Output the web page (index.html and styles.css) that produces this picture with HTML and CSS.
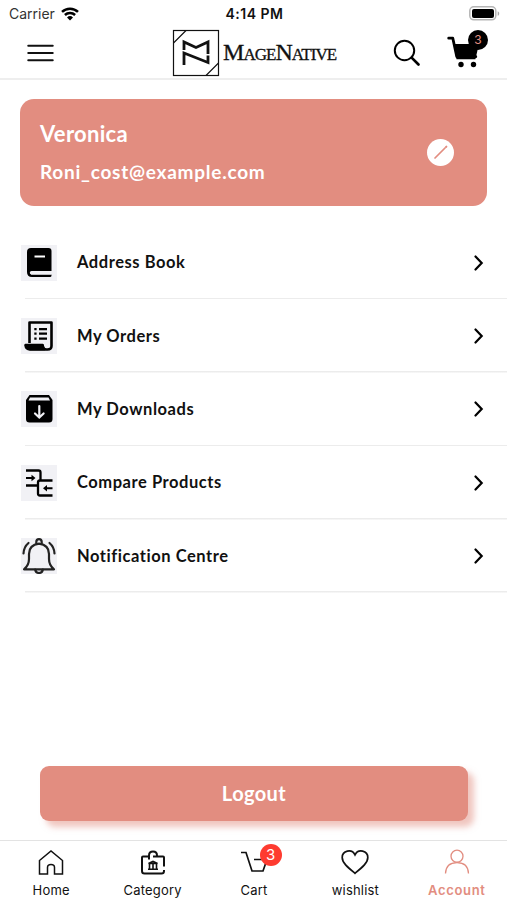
FILE: index.html
```html
<!DOCTYPE html>
<html lang="en">
<head>
    <meta charset="UTF-8">
    <meta name="viewport" content="width=device-width, initial-scale=1">
    <link rel="stylesheet" href="styles.css">
    <title>My Account</title>
</head>
<body>
    <div class="status-bar">
        <div class="carrier">
            <span>Carrier</span>
            <svg width="18" height="14" viewBox="0 0 18 14" fill="none" stroke="#000" stroke-width="2.5">
                <path d="M1 4.9a11.5 11.5 0 0 1 16 0"/>
                <path d="M3.9 8a7.4 7.4 0 0 1 10.2 0"/>
                <path d="M9 13.6l-3-3.1a4.4 4.4 0 0 1 6 0z" fill="#000" stroke="none"/>
            </svg>
        </div>
        <div class="time">4:14 PM</div>
        <div class="battery">
            <svg width="31" height="15" viewBox="0 0 31 15">
                <rect x=".8" y=".8" width="26" height="13" rx="4" fill="#fff" stroke="#b5b5b5" stroke-width="1.5"/>
                <rect x="3" y="3" width="22" height="9" rx="2" fill="#000"/>
                <path d="M28.7 5.2c2 .8 2 3.8 0 4.6z" fill="#a8a8a8"/>
            </svg>
        </div>
    </div>

    <header class="header">
        <svg class="menu-icon" width="27" height="18" viewBox="0 0 27 18" stroke="#111" stroke-width="2.1" stroke-linecap="round">
            <path d="M1.3 1.8h24.4M1.3 9h24.4M1.3 16.2h24.4"/>
        </svg>
        <div class="logo">
            <svg width="48" height="48" viewBox="0 0 48 48" fill="none" stroke="#111">
                <rect x="1.5" y="1.5" width="45" height="45" stroke-width="1.2"/>
                <path d="M1.500 14L14 1.500M34 46.500L46.500 34" stroke-width="1.1"/>
                <path d="M12 21v-8l12 5.500 12-5.500V25" stroke-width="2.800"/>
                <path d="M12 36V24l24 9.500v-7" stroke-width="2.800"/>
            </svg>
            <span class="logo-text">MageNative</span>
        </div>
        <div class="header-actions">
            <svg width="28" height="28" viewBox="0 0 28 28" fill="none" stroke="#000" stroke-linecap="round">
                <circle cx="11.500" cy="11.500" r="9.700" stroke-width="2"/>
                <path d="M18.600 18.600l6.900 6.900" stroke-width="2.700"/>
            </svg>
            <div class="header-cart">
                <svg width="34" height="34" viewBox="0 0 34 34">
                    <path d="M1.700 2.200h4.100l4 18.500h19" fill="none" stroke="#000" stroke-width="2.800" stroke-linecap="round" stroke-linejoin="round"/>
                    <path d="M6.500 8h25.500l-3.600 15.200H9.500z"/>
                    <circle cx="14" cy="28.500" r="2.700"/>
                    <circle cx="26.500" cy="28.500" r="2.700"/>
                </svg>
                <span class="header-badge">3</span>
            </div>
        </div>
    </header>

    <main class="content">
        <section class="profile">
            <div>
                <h1 class="profile-name">Veronica</h1>
                <p class="profile-email">Roni_cost@example.com</p>
            </div>
            <button class="edit-button" type="button" aria-label="Edit">
                <svg width="27" height="27" viewBox="0 0 27 27" stroke="#e28d80" stroke-linecap="round">
                    <path d="M8 19L18 9" stroke-width="1.700"/>
                    <path d="M19 8l.4-.4" stroke-width="2"/>
                </svg>
            </button>
        </section>

        <ul class="menu">
            <li class="menu-item">
                <span class="menu-tile">
                    <svg width="36" height="36" viewBox="0 0 36 36">
                        <path d="M10 3h17.500q3 0 3 3v20H10.500a1.700 1.700 0 0 0 0 3.400H30.500v1q0 1.600-1.500 1.600H11q-5 0-5-5V7q0-4 4-4z"/>
                        <path d="M13.500 11.500h10.500" stroke="#fff" stroke-width="2"/>
                        <path d="M10 28.300H30.500" stroke="#f1f1f5" stroke-width="2.500"/>
                    </svg>
                </span>
                <span class="menu-label">Address Book</span>
                <svg class="chevron" width="10" height="16" viewBox="0 0 10 16"><path d="M1.500 1.500L7.700 8l-6.200 6.500"/></svg>
            </li>
            <li class="menu-item">
                <span class="menu-tile">
                    <svg width="36" height="36" viewBox="0 0 36 36" fill="none" stroke="#000" stroke-width="2.600" stroke-linejoin="round">
                        <path d="M8.500 25V4.500h22V28q0 3.500-4 3.500H9q-4 0-4.500-4.300h17q0 4.300 4 4.300"/>
                        <path d="M4.500 26.500h17.300l1.800 5H9q-4 0-4.500-5z" fill="#000" stroke-width="1.500"/>
                        <path d="M13.300 11.200h2.300M18 11.200h8M13.300 15.700h2.300M18 15.700h8M13.300 20.700h2.300M18 20.700h8" stroke-width="2.300"/>
                    </svg>
                </span>
                <span class="menu-label">My Orders</span>
                <svg class="chevron" width="10" height="16" viewBox="0 0 10 16"><path d="M1.500 1.500L7.700 8l-6.200 6.500"/></svg>
            </li>
            <li class="menu-item">
                <span class="menu-tile">
                    <svg width="36" height="36" viewBox="0 0 36 36">
                        <path d="M8.500 4h19.500l3.500 5v19q0 3.500-3.500 3.500H8.500Q5 31.500 5 28V9z"/>
                        <path d="M7.500 9.500l1.500-3h18.500l1.500 3z" fill="#f1f1f5"/>
                        <path d="M18.300 15v11M14 22.500l4.300 4 4.300-4" fill="none" stroke="#f1f1f5" stroke-width="2.200" stroke-linecap="round"/>
                    </svg>
                </span>
                <span class="menu-label">My Downloads</span>
                <svg class="chevron" width="10" height="16" viewBox="0 0 10 16"><path d="M1.500 1.500L7.700 8l-6.200 6.500"/></svg>
            </li>
            <li class="menu-item">
                <span class="menu-tile">
                    <svg width="36" height="36" viewBox="0 0 36 36" fill="none" stroke="#000" stroke-width="2.300" stroke-linejoin="round">
                        <path d="M5 5.500H17.500q2 0 2 2v7.500M5 20.500h12.500"/>
                        <path d="M31.500 15.500H19q-2 0-2 2V28.500q0 2 2 2h12.500"/>
                        <path d="M5 13h7M31.500 23.300h-7" stroke-width="2"/>
                        <path d="M10.500 9.800v6.400l4-3.200zM26 20.100v6.400l-4-3.200z" fill="#000" stroke="none"/>
                    </svg>
                </span>
                <span class="menu-label">Compare Products</span>
                <svg class="chevron" width="10" height="16" viewBox="0 0 10 16"><path d="M1.500 1.500L7.700 8l-6.200 6.500"/></svg>
            </li>
            <li class="menu-item">
                <span class="menu-tile">
                    <svg width="36" height="36" viewBox="0 0 36 36" fill="none" stroke="#222" stroke-width="2.200" stroke-linecap="round" stroke-linejoin="round">
                        <path d="M3 31.300q5-4 5-10.300v-5q0-9 10-10.300Q28 7 28 16v5q0 6.300 5 10.300z"/>
                        <path d="M15.300 5.600V4q0-2.900 2.700-2.900T20.700 4v1.600M14.200 31.500q.5 3.500 3.800 3.500t3.800-3.500"/>
                        <path d="M7.500 5q-4.700 4-5 10.500M28.500 5q4.700 4 5 10.500"/>
                    </svg>
                </span>
                <span class="menu-label">Notification Centre</span>
                <svg class="chevron" width="10" height="16" viewBox="0 0 10 16"><path d="M1.500 1.500L7.700 8l-6.200 6.500"/></svg>
            </li>
        </ul>

        <button class="logout" type="button">Logout</button>
    </main>

    <nav class="tab-bar">
        <a class="tab tab-home">
            <svg width="28" height="28" viewBox="0 0 28 28" stroke-width="1.500">
                <path d="M2.500 11.500L14 2l11.500 9.500V25h-8v-6.500q0-3-3.500-3t-3.500 3V25h-8z"/>
            </svg>
            <span>Home</span>
        </a>
        <a class="tab tab-category">
            <svg width="28" height="28" viewBox="0 0 28 28" stroke-width="2">
                <path d="M10 7.500H4q-1 0-1 1V22q0 2.500 2.500 2.500h17Q25 24.500 25 22v-1M25 17.500V8.500q0-1-1-1H14M10 10.500V6.500q0-4 4-4t4 4v1"/>
                <path d="M9.500 14.500l4.500-2 4.500 2zM10.500 15v5M14 15v5M17.500 15v5M9 20.200h10" stroke-width="1.600"/>
            </svg>
            <span>Category</span>
        </a>
        <a class="tab tab-cart">
            <svg width="28" height="28" viewBox="0 0 28 28" stroke-width="1.700">
                <path d="M1 3.500h5l6 18.500h11l4-11.500H14"/>
            </svg>
            <b class="tab-badge">3</b>
            <span>Cart</span>
        </a>
        <a class="tab tab-wishlist">
            <svg width="28" height="28" viewBox="0 0 28 28" stroke-width="1.700">
                <path d="M14 24.300C7 18.500 1.200 14 1.200 8.500c0-6.800 9.500-9.200 12.800-2.700 3.300-6.500 12.800-4.100 12.800 2.700 0 5.500-5.800 10-12.800 15.800z"/>
            </svg>
            <span>wishlist</span>
        </a>
        <a class="tab tab-account active">
            <svg width="28" height="28" viewBox="0 0 28 28" stroke-width="1.300">
                <circle cx="14" cy="7.200" r="6"/>
                <path d="M2.500 24.500q.5-10.800 11.500-10.800t11.500 10.800"/>
            </svg>
            <span>Account</span>
        </a>
    </nav>
</body>
</html>
```

FILE: styles.css
```css
* {
    margin: 0;
    padding: 0;
    box-sizing: border-box;
}

body {
    display: flex;
    flex-direction: column;
    height: 900px;
    overflow: hidden;
    background-color: #fff;
    color: #111;
    font-family: Lato, "Open Sans", sans-serif;
    font-variant-ligatures: none;
}

button {
    border: none;
    font-family: inherit;
    cursor: pointer;
}

/* Status bar */
.status-bar {
    display: grid;
    grid-template-columns: 1fr auto 1fr;
    align-items: center;
    height: 27px;
    padding: 0 7px 0 9px;
    font-family: Inter, sans-serif;
    font-size: 14px;
}

.carrier {
    display: flex;
    align-items: center;
    gap: 6px;
    color: #333;
}

.time {
    font-weight: 600;
    letter-spacing: 0.5px;
}

.battery {
    display: flex;
    justify-content: flex-end;
}

/* Header */
.header {
    display: grid;
    grid-template-columns: 145px 1fr 114px;
    align-items: center;
    height: 53px;
    padding: 0 20px 0 27px;
    border-bottom: 2px solid #eee;
}

.logo {
    display: flex;
    align-items: center;
    gap: 3px;
}

.logo-text {
    font-family: "Liberation Serif", serif;
    font-size: 24px;
    font-variant: small-caps;
    letter-spacing: -0.95px;
    -webkit-text-stroke: 0.3px #111;
}

.header-actions {
    display: flex;
    align-items: center;
    justify-content: space-between;
    padding: 0 6px 0 20px;
}

.header-cart {
    position: relative;
    height: 34px;
}

.header-badge {
    position: absolute;
    top: -6px;
    right: -7px;
    width: 20px;
    height: 20px;
    border-radius: 50%;
    background-color: #000;
    color: #e28d80;
    font-family: Inter, sans-serif;
    font-size: 12px;
    line-height: 20px;
    text-align: center;
}

/* Profile card */
.content {
    display: flex;
    flex: 1;
    flex-direction: column;
    padding-top: 19px;
}

.profile {
    display: flex;
    align-items: center;
    justify-content: space-between;
    height: 107px;
    margin: 0 20px;
    padding: 0 33px 0 20px;
    border-radius: 14px;
    background-color: #e28d80;
    color: #fff;
}

.profile-name {
    font-size: 22px;
    font-weight: bold;
    line-height: 34px;
    letter-spacing: 0.3px;
}

.profile-email {
    margin-top: 5px;
    padding-bottom: 1px;
    font-size: 19px;
    font-weight: bold;
    line-height: 32px;
    letter-spacing: 0.75px;
}

.edit-button {
    width: 27px;
    height: 27px;
    border-radius: 50%;
    background-color: #fff;
}

.edit-button svg {
    display: block;
}

/* Account menu */
.menu {
    margin-top: 20px;
    list-style: none;
}

.menu-item {
    display: flex;
    align-items: center;
    height: 73.4px;
    padding: 0 23px 0 21px;
    background: linear-gradient(#ececec, #ececec) 25px 100% / 100% 1.5px no-repeat;
}

.menu-tile {
    display: flex;
    width: 36px;
    height: 36px;
    margin-right: 20px;
    background-color: #f1f1f5;
}

.menu-label {
    flex: 1;
    padding-bottom: 1px;
    font-size: 16.5px;
    font-weight: bold;
    letter-spacing: 0.55px;
}

.chevron {
    fill: none;
    stroke: #000;
    stroke-width: 2.2;
    stroke-linecap: round;
}

.logout {
    height: 55px;
    margin: auto 39px 19px 40px;
    padding-bottom: 1px;
    border-radius: 9px;
    background-color: #e28d80;
    box-shadow: 6px 6px 6px rgba(226, 141, 128, 0.5);
    color: #fff;
    font-size: 20px;
    font-weight: bold;
    letter-spacing: 0.4px;
}

/* Bottom tabs */
.tab-bar {
    display: grid;
    grid-template-columns: repeat(5, 1fr);
    height: 60px;
    padding-top: 8px;
    border-top: 1px solid #e3e3e3;
    font-family: Inter, sans-serif;
    font-size: 13px;
}

.tab {
    position: relative;
    display: flex;
    flex-direction: column;
    align-items: center;
    gap: 5px;
    padding-left: 1px;
    line-height: 16px;
    letter-spacing: 0.2px;
}

.tab svg {
    fill: none;
    stroke: #111;
}

.tab-badge {
    position: absolute;
    top: -5px;
    left: 57px;
    width: 22px;
    height: 22px;
    border-radius: 50%;
    background-color: #fe3b30;
    color: #fff;
    font-size: 15px;
    font-weight: normal;
    line-height: 22px;
    text-align: center;
}

.tab.active {
    color: #e28d80;
    font-weight: 600;
    letter-spacing: 0.7px;
}

.tab.active svg {
    stroke: #e28d80;
}
```
